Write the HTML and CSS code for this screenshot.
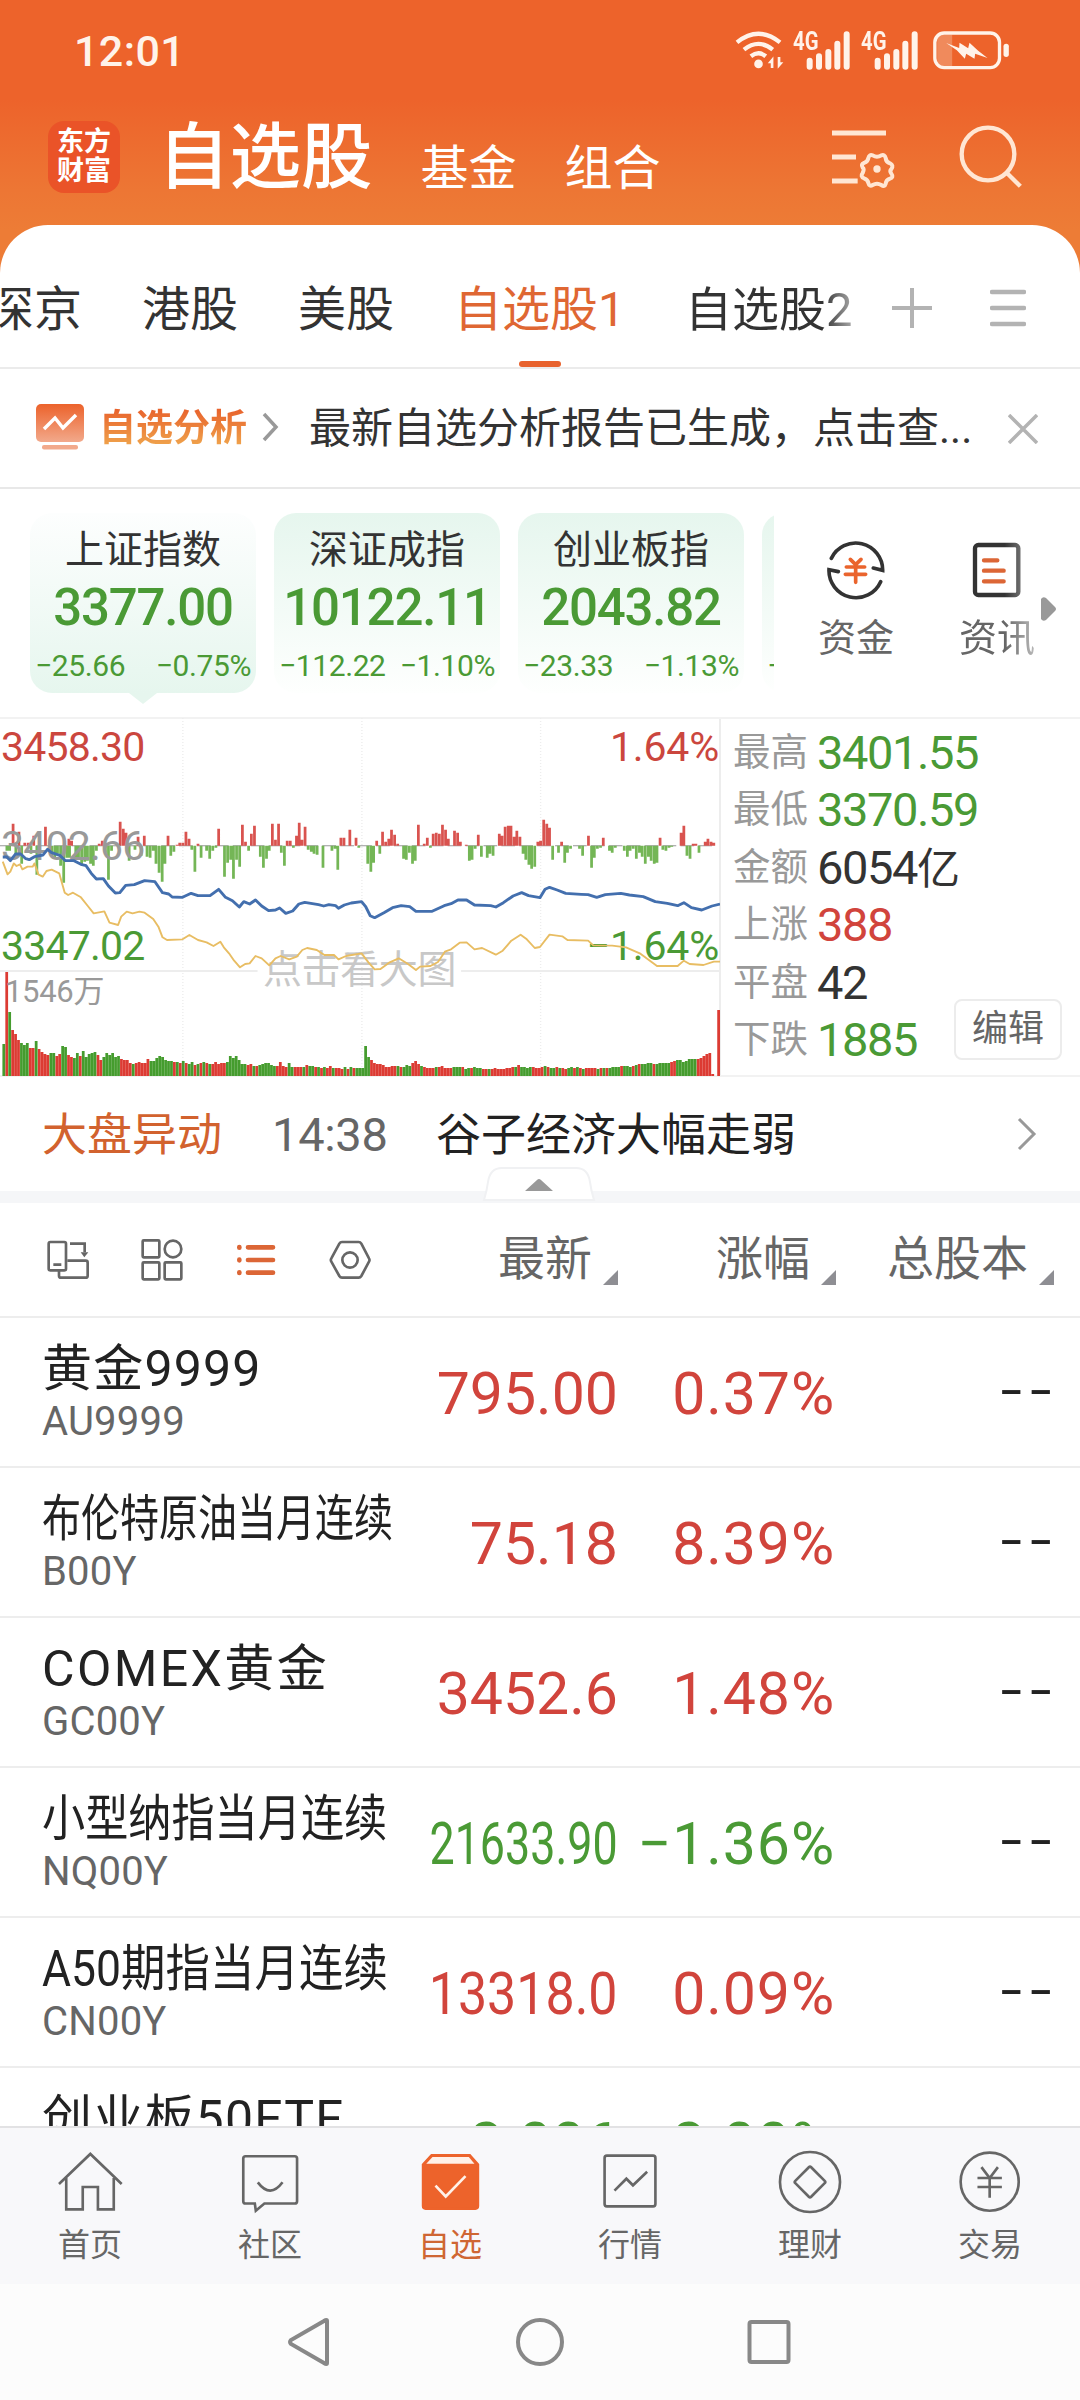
FILE: index.html
```html
<!DOCTYPE html>
<html lang="zh-CN">
<head>
    <meta charset="UTF-8">
    <meta name="viewport" content="width=device-width, initial-scale=1.0">
    <title>自选股</title>
    <link rel="stylesheet" href="styles.css">
</head>
<body>
    <header class="top">
        <div class="status">
            <span class="clock">12:01</span>
            <div class="status-icons">
                <svg class="wifi" viewBox="106 60 148 120" width="49" height="40" fill="none" stroke="#fff3ea" stroke-width="13">
                    <path d="M112 97Q177 45 242 97M133 119Q177 84 220 119M154 139Q177 121 199 139"/>
                    <circle cx="177" cy="162" r="13" fill="#fff3ea" stroke="none"/>
                    <path d="M205 160l17-20v34h-8v-14zM252 157l-17 20v-36h8v16z" fill="#fff3ea" stroke="none"/>
                </svg>
                <span class="signal">
                    <b>4G</b>
                    <svg viewBox="320 60 132 120" width="44" height="40" stroke="#fff3ea" stroke-width="18" stroke-linecap="round"><path d="M331 152v18M359 139v31M387 126v44M414 101v69M442 73v97"/></svg>
                </span>
                <span class="signal">
                    <b>4G</b>
                    <svg viewBox="320 60 132 120" width="44" height="40" stroke="#fff3ea" stroke-width="18" stroke-linecap="round"><path d="M331 152v18M359 139v31M387 126v44M414 101v69M442 73v97"/></svg>
                </span>
                <svg class="battery" viewBox="700 60 230 120" width="77" height="40">
                    <path d="M712 74h45v96h-45z" fill="#f08a5c"/>
                    <rect x="705" y="69" width="194" height="104" rx="28" fill="none" stroke="#fff3ea" stroke-width="10"/>
                    <rect x="911" y="101" width="16" height="40" rx="8" fill="#fff3ea"/>
                    <path d="M739 99l39 15 1-16 26 17 4-17 26 24 28 22-37-13-2 15-25-15-4 15-24-25z" fill="#fff3ea"/>
                </svg>
            </div>
        </div>
        <div class="title-bar">
            <div class="logo"><span>东方</span><span>财富</span></div>
            <h1>自选股</h1>
            <a class="section">基金</a>
            <a class="section">组合</a>
            <svg class="list-set" viewBox="390 345 192 192" width="64" height="64" fill="none" stroke="#ffe6d3" stroke-width="15">
                <path d="M393 369h162M393 441h72M393 513h77"/>
                <path d="M515 436q13 8 26 0 10-4 13 8 1 12 13 16 12 6 4 17-6 6 0 14 8 11-4 15-12 4-13 15-3 11-13 4-13-8-26 0-10 6-13-6-1-10-13-14-12-6-4-16 6-12 0-16-6-11 4-14 12-5 13-15 3-12 13-8z" stroke-width="12"/>
                <circle cx="528" cy="477" r="11" fill="#ffe6d3" stroke="none"/>
            </svg>
            <svg class="search" viewBox="774 345 192 192" width="64" height="64" fill="none" stroke="#ffe6d3" stroke-width="13">
                <circle cx="861" cy="432" r="79"/>
                <path d="M917 488l41 41"/>
            </svg>
        </div>
    </header>

    <main class="panel">
        <nav class="tabs">
            <div class="tab-scroll">
                <a>深京</a>
                <a>港股</a>
                <a>美股</a>
                <a class="active">自选股1</a>
                <a class="last">自选股2</a>
            </div>
            <svg viewBox="0 0 40 40" width="40" height="40" stroke="#b3b3b3" stroke-width="4"><path d="M0 20h40M20 0v40"/></svg>
            <svg viewBox="0 0 36 40" width="36" height="40" stroke="#b3b3b3" stroke-width="4.5" stroke-linecap="round"><path d="M2 4h32M2 20h32M2 36h32"/></svg>
        </nav>

        <section class="report">
            <svg viewBox="0 0 48 48" width="48" height="48">
                <defs>
                    <linearGradient id="ic" x1="0" y1="0" x2="0" y2="1"><stop offset="0" stop-color="#ec622b"/><stop offset="1" stop-color="#f2a98b"/></linearGradient>
                </defs>
                <rect x="0" y="1" width="48" height="38" rx="5" fill="url(#ic)"/>
                <rect x="6" y="42" width="36" height="4.500" rx="2" fill="#f2a98b"/>
                <path d="M8 26l11-11 8 10 13-13" fill="none" stroke="#fff" stroke-width="3.500"/>
            </svg>
            <strong>自选分析</strong>
            <svg class="more" viewBox="0 0 18 30" width="18" height="30" fill="none" stroke="#999" stroke-width="3.500"><path d="M3 2l12 13-12 13"/></svg>
            <p>最新自选分析报告已生成，点击查...</p>
            <svg class="close" viewBox="0 0 30 30" width="30" height="30" stroke="#b3b3b3" stroke-width="3.500"><path d="M1 1l28 28M29 1L1 29"/></svg>
        </section>

        <section class="indices">
            <div class="cards">
                <div class="card current"><h3>上证指数</h3><b>3377.00</b><p><span>−25.66</span><span>−0.75%</span></p></div>
                <div class="card"><h3>深证成指</h3><b>10122.11</b><p><span>−112.22</span><span>−1.10%</span></p></div>
                <div class="card"><h3>创业板指</h3><b>2043.82</b><p><span>−23.33</span><span>−1.13%</span></p></div>
                <div class="card"><h3></h3><b></b><p><span>−</span></p></div>
            </div>
            <div class="tools">
                <a>
                    <svg viewBox="138 60 180 180" width="60" height="60" fill="none" stroke="#333" stroke-width="11" stroke-linecap="round">
                        <path d="M154 115A81 81 0 0 1 308 151l-28-7M302 185A81 81 0 0 1 147 149l28 6"/>
                        <path d="M211 118l16 16 16-16M199 141h55M196 163h61M227 135v52" stroke="#ea642d"/>
                    </svg>
                    资金
                </a>
                <a class="fade">
                    <svg viewBox="562 60 180 180" width="60" height="60" fill="none" stroke="#333" stroke-width="13" stroke-linecap="round">
                        <rect x="586" y="75" width="130" height="150" rx="10"/>
                        <path d="M613 121h40M613 152h59M613 184h59" stroke="#dc6636"/>
                    </svg>
                    资讯
                </a>
                <svg class="next" viewBox="0 0 15 24" width="15" height="24"><path d="M0 2q2-3 5-1l9 9q2 2 0 4l-9 9q-3 2-5-1z" fill="#999"/></svg>
            </div>
        </section>

        <section class="market">
            <div class="chart">
                <!-- stretched plot: y 407 is the previous close, y 1098 the volume baseline -->
                <svg viewBox="0 21 2091 1080" preserveAspectRatio="none" width="720" height="360" fill="none">
                    <g stroke="#ededed">
                        <path d="M0 783h748M1339 783h752" stroke-width="2" vector-effect="non-scaling-stroke"/>
                        <path d="M531 24v1074M1051 24v1074M1570 24v1074" stroke-width="4" stroke-dasharray="3 6"/>
                    </g>
                    <path d="M0 407h2080" stroke="#999" stroke-width="3" stroke-dasharray="40 12"/>
                    <path id="ups" stroke="#d9534f" stroke-width="8"/>
                    <path id="downs" stroke="#74b656" stroke-width="8"/>
                    <path id="volUp" stroke="#dc3b33" stroke-width="8"/>
                    <path id="volDown" stroke="#459c2e" stroke-width="8"/>
                </svg>
                <span class="lbl high">3458.30</span>
                <span class="lbl mid">3402.66</span>
                <span class="lbl low">3347.02</span>
                <span class="lbl high right">1.64%</span>
                <span class="lbl low right">−1.64%</span>
                <span class="lbl vol">1546万</span>
                <span class="lbl hint">点击看大图</span>
                <svg class="lines" viewBox="0 21 2091 1080" preserveAspectRatio="none" width="720" height="360" fill="none" stroke-linejoin="round">
                    <polyline stroke="#e8bd63" stroke-width="5.500" points="8,455 22,493 30,485 40,460 48,468 58,463 65,478 80,470 95,470 100,460 112,494 124,500 135,483 150,479 172,490 188,548 198,555 212,548 235,562 255,588 272,610 303,604 318,638 343,645 352,620 368,605 385,610 405,605 420,608 445,627 460,650 472,682 485,690 530,688 550,675 575,690 600,697 620,708 640,695 650,712 665,730 680,752 697,772 712,762 725,760 742,738 760,745 782,766 800,745 815,738 840,748 862,740 878,720 892,714 920,720 942,735 970,735 983,748 1005,738 1050,730 1070,757 1088,778 1105,777 1130,758 1158,745 1185,762 1208,780 1220,770 1250,768 1272,756 1292,725 1310,718 1335,698 1355,697 1378,718 1400,714 1440,734 1460,722 1485,692 1512,674 1530,688 1553,714 1568,711 1596,674 1633,679 1648,690 1708,692 1723,706 1778,707 1818,712 1858,730 1908,768 1968,768 1986,752 2003,762 2043,765 2073,755 2091,755"/>
                    <polyline stroke="#436fae" stroke-width="8.500" points="8,441 20,441 30,452 45,432 60,432 75,446 85,449 100,440 125,435 138,418 150,428 175,437 190,452 215,452 235,463 250,467 265,490 280,507 300,506 315,528 335,549 348,548 365,526 390,524 420,512 450,515 472,548 490,552 500,561 530,562 555,550 575,557 610,557 635,538 655,562 675,572 695,591 708,575 725,582 742,570 760,588 780,602 800,600 812,594 830,610 850,603 868,582 885,577 925,584 940,588 955,584 975,587 983,595 1000,585 1020,579 1050,575 1062,590 1075,617 1088,623 1115,608 1140,593 1165,587 1190,590 1208,604 1255,604 1290,587 1310,581 1330,570 1355,570 1378,585 1425,587 1440,591 1462,578 1490,558 1515,548 1535,557 1568,563 1583,538 1596,532 1618,540 1643,550 1688,553 1708,554 1733,562 1758,554 1803,550 1828,555 1868,560 1903,575 1938,580 1968,587 1986,578 2008,593 2038,600 2068,588 2091,582"/>
                </svg>
            </div>
            <dl class="stats">
                <div><dt>最高</dt><dd class="down">3401.55</dd></div>
                <div><dt>最低</dt><dd class="down">3370.59</dd></div>
                <div><dt>金额</dt><dd>6054<small>亿</small></dd></div>
                <div><dt>上涨</dt><dd class="up">388</dd></div>
                <div><dt>平盘</dt><dd>42</dd></div>
                <div><dt>下跌</dt><dd class="down">1885</dd></div>
                <button type="button">编辑</button>
            </dl>
        </section>

        <section class="news">
            <strong>大盘异动</strong>
            <time>14:38</time>
            <p>谷子经济大幅走弱</p>
            <svg viewBox="0 0 20 34" width="20" height="34" fill="none" stroke="#999" stroke-width="3"><path d="M2 2l15 15L2 32"/></svg>
            <svg class="handle" viewBox="0 0 114 36" width="114" height="36">
                <path d="M2 34Q5 24 6 16 8 2 20 2h74q12 0 14 14 1 8 4 18z" fill="#fff" stroke="#f0f1f3" stroke-width="2"/>
                <path d="M43 25l12-11q2-2 4 0l12 11z" fill="#999"/>
            </svg>
        </section>

        <section class="list">
            <div class="row head">
                <div class="views">
                    <svg viewBox="141 117 126 126" width="42" height="42" fill="none" stroke="#666" stroke-width="8">
                        <rect x="146" y="126" width="52" height="85" rx="5"/>
                        <path d="M160 194h24M210 131h44v26M202 182h55q6 0 6 6v39q0 6-6 6h-74q-6 0-6-6v-14"/>
                        <path d="M242 157h23l-12 15z" fill="#666" stroke="none"/>
                    </svg>
                    <svg viewBox="423 117 126 126" width="42" height="42" fill="none" stroke="#666" stroke-width="8">
                        <rect x="428" y="121" width="50" height="51" rx="3"/>
                        <circle cx="519" cy="147" r="25"/>
                        <rect x="428" y="187" width="50" height="51" rx="3"/>
                        <rect x="494" y="187" width="50" height="51" rx="3"/>
                    </svg>
                    <svg viewBox="705 117 126 126" width="42" height="42" stroke="#dc6636" stroke-width="14" stroke-linecap="round">
                        <path d="M744 142h75M744 180h75M744 218h75M718 141v2M718 179v2M718 217v2"/>
                    </svg>
                    <svg viewBox="987 117 126 126" width="42" height="42" fill="none" stroke="#666" stroke-width="8">
                        <path d="M1026 126h50q5 0 8 5l23 44q3 5 0 10l-23 43q-3 5-8 5h-50q-5 0-8-5l-24-43q-3-5 0-10l24-44q3-5 8-5z"/>
                        <circle cx="1050" cy="180" r="23"/>
                    </svg>
                </div>
                <span class="sort">最新</span>
                <span class="sort">涨幅</span>
                <span class="sort">总股本</span>
            </div>
            <div class="row">
                <div><h4>黄金9999</h4><p>AU9999</p></div>
                <b class="up">795.00</b><b class="pct up">0.37%</b><b class="none">--</b>
            </div>
            <div class="row">
                <div><h4 class="fit-9">布伦特原油当月连续</h4><p>B00Y</p></div>
                <b class="up">75.18</b><b class="pct up">8.39%</b><b class="none">--</b>
            </div>
            <div class="row">
                <div><h4 class="wide">COMEX黄金</h4><p>GC00Y</p></div>
                <b class="up">3452.6</b><b class="pct up">1.48%</b><b class="none">--</b>
            </div>
            <div class="row">
                <div><h4 class="fit-8">小型纳指当月连续</h4><p>NQ00Y</p></div>
                <b class="down tight-8">21633.90</b><b class="pct down">−1.36%</b><b class="none">--</b>
            </div>
            <div class="row">
                <div><h4 class="fit-mix">A50期指当月连续</h4><p>CN00Y</p></div>
                <b class="up tight-7">13318.0</b><b class="pct up">0.09%</b><b class="none">--</b>
            </div>
            <div class="row">
                <div><h4>创业板50ETF</h4></div>
                <b class="down">2.006</b><b class="pct down">−2.00%</b><b class="none">--</b>
            </div>
        </section>
    </main>

    <nav class="bottom">
        <a>
            <svg viewBox="48 24 200 200" width="66" height="66" fill="none" stroke="#666" stroke-width="8">
                <path d="M54 130l95-91 95 91M76 112v95h50v-68h46v68h48v-95"/>
            </svg>
            首页
        </a>
        <a>
            <svg viewBox="588 24 200 200" width="66" height="66" fill="none" stroke="#666" stroke-width="8">
                <path d="M614 46h149q7 0 7 7v129q0 7-7 7h-92l-26 22-3-22h-28q-7 0-7-7V53q0-7 7-7z"/>
                <path d="M651 125q38 50 75 0"/>
            </svg>
            社区
        </a>
        <a class="active">
            <svg viewBox="1128 24 200 200" width="66" height="66" fill="none">
                <path d="M1146 71l26-28h116l25 28v126q0 8-8 8h-151q-8 0-8-8z" fill="#ed632b" stroke="#ed632b" stroke-width="7"/>
                <path d="M1156 69l19-21h110l17 21z" fill="#fff1e8"/>
                <path d="M1184 135l31 33 60-62" stroke="#fff1e8" stroke-width="8"/>
            </svg>
            自选
        </a>
        <a>
            <svg viewBox="108 24 200 200" width="66" height="66" fill="none" stroke="#666" stroke-width="8">
                <rect x="131" y="44" width="154" height="154" rx="7"/>
                <path d="M161 150l36-36 20 20 43-41"/>
            </svg>
            行情
        </a>
        <a>
            <svg viewBox="648 24 200 200" width="66" height="66" fill="none" stroke="#666" stroke-width="8">
                <circle cx="748" cy="124" r="91"/>
                <rect x="714" y="90" width="68" height="68" rx="5" transform="rotate(45 748 124)"/>
            </svg>
            理财
        </a>
        <a>
            <svg viewBox="1188 24 200 200" width="66" height="66" fill="none" stroke="#666" stroke-width="8">
                <circle cx="1287" cy="123" r="88"/>
                <path d="M1262 79l25 33 25-33M1250 112h74M1250 139h74M1287 112v60"/>
            </svg>
            交易
        </a>
    </nav>

    <footer class="system">
        <svg viewBox="0 0 48 52" width="48" height="52"><path d="M41 5v42q0 2-3 0L5 28q-2-2 0-4L38 5q3-2 3 0z"/></svg>
        <svg viewBox="0 0 48 52" width="48" height="52"><circle cx="24" cy="26" r="22"/></svg>
        <svg viewBox="0 0 48 52" width="48" height="52"><rect x="3.500" y="6" width="39" height="40" rx="2"/></svg>
    </footer>
    <script src="chart.js"></script>
</body>
</html>
```

FILE: styles.css
```css
/* General Styling */
* {
    box-sizing: border-box;
}

body {
    display: flex;
    flex-direction: column;
    width: 1080px;
    height: 2400px;
    margin: 0;
    overflow: hidden;
    background: linear-gradient(#ed632b 100px, #ed7634 190px, #ed7c36 230px);
    color: #333;
    font-family: Roboto, "Noto Sans CJK SC", sans-serif;
}

h1, h3, h4, p, dl, dd {
    margin: 0;
    font-weight: normal;
}

svg {
    display: block;
    flex: none;
}

.up {
    color: #d1443c;
}

.down {
    color: #4a9a35;
}

/* Header */
.top {
    height: 225px;
    flex: none;
    color: #fff;
}

.status {
    display: flex;
    justify-content: space-between;
    height: 102px;
    padding: 30px 70px 0 74px;
}

.clock {
    font-size: 43px;
    font-weight: 500;
    line-height: 43px;
    letter-spacing: 0.4px;
    color: #fff3ea;
}

.status-icons {
    display: flex;
}

.wifi {
    margin-right: -2px;
}

.signal {
    display: flex;
    width: 57px;
    margin-left: 11px;
}

.signal b {
    width: 13px;
    font-size: 26px;
    line-height: 23px;
    color: #fff3ea;
    transform: scaleX(0.78);
    transform-origin: left;
}

.battery {
    margin-left: 15px;
}

.title-bar {
    display: flex;
    height: 110px;
    padding-left: 48px;
}

.logo {
    display: flex;
    flex-direction: column;
    width: 72px;
    height: 72px;
    margin-top: 19px;
    padding: 7px 0 0 9px;
    border-radius: 16px;
    background: #ea5328;
    font-size: 27px;
    font-weight: 700;
    line-height: 29px;
}

.title-bar h1 {
    margin: 5px 0 0 38px;
    font-size: 71.500px;
    font-weight: 500;
    line-height: 102px;
}

.section {
    margin-left: 48px;
    font-size: 48px;
    line-height: 133px;
}

.section + .section {
    margin-left: 48px;
}

.list-set {
    margin: 23px 0 0 170px;
}

.search {
    margin: 23px 0 0 64px;
}

/* White sheet */
.panel {
    display: flex;
    flex: 1;
    flex-direction: column;
    min-height: 0;
    border-radius: 48px 48px 0 0;
    background: #fff;
    overflow: hidden;
}

.tabs {
    display: flex;
    flex: none;
    align-items: center;
    height: 144px;
    padding-top: 24px;
    border-bottom: 2px solid #ebebeb;
}

.tab-scroll {
    display: flex;
    gap: 60px;
    align-self: stretch;
    width: 855px;
    margin-right: 37px;
    overflow: hidden;
    font-size: 48px;
    line-height: 121px;
    white-space: nowrap;
}

.tab-scroll a:first-child {
    margin-left: -14px;
}

.tab-scroll .active {
    display: flex;
    flex-direction: column;
    align-items: center;
    height: 118px;
    font-size: 48px;
    color: #df6733;
}

.tab-scroll .active::after {
    content: "";
    flex: none;
    width: 42px;
    height: 6px;
    margin-top: -9px;
    border-radius: 3px;
    background: #e8622d;
}

.tab-scroll .last {
    font-size: 47px;
    background: linear-gradient(90deg, #333 138px, #bbb 172px);
    background-clip: text;
    -webkit-background-clip: text;
    color: transparent;
}

.tabs svg + svg {
    margin-left: 58px;
}

.report {
    display: flex;
    flex: none;
    align-items: center;
    height: 120px;
    padding: 0 42px 2px 36px;
    border-bottom: 2px solid #e8e8e8;
}

.report strong {
    margin: -4px 0 0 15px;
    font-size: 37px;
    background: linear-gradient(#e8622c 20%, #efa04a 85%);
    background-clip: text;
    -webkit-background-clip: text;
    color: transparent;
}

.report .more {
    margin-left: 14px;
}

.report p {
    flex: 1;
    margin: -6px 0 0 30px;
    font-size: 42px;
    white-space: nowrap;
}

.report .close {
    margin-top: 4px;
}

/* Index cards */
.indices {
    display: flex;
    flex: none;
    height: 228px;
    padding-top: 24px;
}

.cards {
    display: flex;
    gap: 18px;
    width: 774px;
    padding-left: 30px;
    overflow: hidden;
}

.card {
    flex: none;
    width: 226px;
    height: 180px;
    padding-top: 10px;
    border-radius: 22px;
    background: linear-gradient(#e6f6ee, #fefffe);
    text-align: center;
    white-space: nowrap;
}

.card.current {
    background: linear-gradient(#fdfefe, #e6f6ee);
}

.card.current::after {
    content: "";
    display: block;
    width: 28px;
    height: 11px;
    margin: 3px auto 0;
    background: #e6f6ee;
    clip-path: polygon(0 0, 100% 0, 50% 100%);
}

.card h3 {
    height: 54px;
    font-size: 39px;
    line-height: 54px;
}

.card b {
    display: block;
    height: 60px;
    font-size: 51px;
    font-weight: 500;
    line-height: 62px;
    letter-spacing: -1.200px;
    color: #4a9a35;
}

.card p {
    display: flex;
    justify-content: space-between;
    height: 53px;
    padding: 0 5px;
    font-size: 30px;
    line-height: 58px;
    letter-spacing: -0.4px;
    color: #4a9a35;
}

.tools {
    display: flex;
    flex: 1;
    padding: 27px 0 0 44px;
}

.tools a {
    display: flex;
    flex-direction: column;
    align-items: center;
    width: 76px;
    margin-right: 65px;
    font-size: 38px;
    line-height: 76px;
    color: #666;
}

.tools .fade {
    margin-right: 6px;
    -webkit-mask-image: linear-gradient(90deg, #000 60%, rgba(0, 0, 0, 0.45));
    mask-image: linear-gradient(90deg, #000 60%, rgba(0, 0, 0, 0.45));
}

.next {
    margin-top: 57px;
}

/* Intraday chart and stats */
.market {
    display: flex;
    flex: none;
    height: 360px;
    border-top: 2px solid #f2f2f2;
    border-bottom: 2px solid #f2f2f2;
}

.chart {
    position: relative;
    width: 721px;
    border-right: 2px solid #ededed;
}

.chart svg {
    margin-top: -2px;
}

.chart .lines {
    position: absolute;
    top: 0;
    left: 0;
}

/* labels lie over the plot */
.lbl {
    position: absolute;
    left: 1px;
    font-size: 41px;
    line-height: 48px;
    letter-spacing: -0.8px;
}

.lbl.right {
    left: auto;
    right: 0;
    letter-spacing: -0.2px;
}

.high {
    top: 4px;
    color: #cb463e;
}

.mid {
    top: 103px;
    color: #999;
}

.low {
    top: 203px;
    color: #4a9a35;
}

.vol {
    top: 249px;
    left: 5px;
    font-size: 31px;
    letter-spacing: -0.3px;
    color: #999;
}

.hint {
    top: 227px;
    left: 263px;
    font-size: 39px;
    letter-spacing: -0.4px;
    color: #c8c8c8;
}

.stats {
    position: relative;
    flex: 1;
    padding: 5px 0 0 12px;
}

.stats div {
    display: flex;
    height: 57.400px;
    line-height: 57px;
}

.stats dt {
    width: 84px;
    font-size: 37.500px;
    color: #999;
}

.stats dd {
    font-size: 47px;
    letter-spacing: -1.400px;
}

.stats small {
    font-size: 43px;
}

.stats button {
    position: absolute;
    right: 18px;
    bottom: 15px;
    width: 108px;
    height: 61px;
    padding: 0;
    border: 2px solid #ececec;
    border-radius: 8px;
    background: #fff;
    font: 36px/57px Roboto, "Noto Sans CJK SC", sans-serif;
    color: #666;
}

/* Market news */
.news {
    position: relative;
    display: flex;
    flex: none;
    align-items: center;
    height: 126px;
    padding: 0 43px 0 42px;
    border-bottom: 12px solid #f5f6f8;
    font-size: 45px;
}

.news strong {
    margin-top: -5px;
    font-weight: normal;
    color: #d2622e;
}

.news time {
    width: 164px;
    margin-left: 50px;
    font-size: 47px;
    letter-spacing: -0.3px;
    color: #666;
}

.news p {
    flex: 1;
    margin-top: -5px;
    color: #222;
}

.news .handle {
    position: absolute;
    left: 482px;
    bottom: -11px;
}

/* Watch list */
.row {
    display: grid;
    grid-template-columns: 378px 198px 217px 219px;
    height: 150px;
    padding-left: 42px;
    border-bottom: 2px solid #ededed;
}

.row.head {
    grid-template-columns: 358px 218px 218px 218px;
    height: 115px;
}

.views {
    display: flex;
    gap: 52px;
    padding: 36px 0 0 5px;
}

.sort {
    display: flex;
    justify-content: flex-end;
    font-size: 47px;
    line-height: 111px;
    color: #666;
}

.sort::after {
    content: "";
    width: 15px;
    height: 15px;
    margin: 67px 0 0 11px;
    background: #8e8e93;
    clip-path: polygon(100% 0, 100% 100%, 0 100%);
}

.row h4 {
    height: 82px;
    padding-top: 16px;
    font-size: 50px;
    line-height: 70px;
    letter-spacing: 1.200px;
    white-space: nowrap;
    color: #222;
    transform-origin: left;
}

.row p {
    font-size: 40px;
    line-height: 44px;
    letter-spacing: 0.2px;
    color: #666;
}

.row b {
    justify-self: end;
    font-size: 59px;
    font-weight: normal;
    line-height: 152px;
    transform-origin: right;
}

.row .pct {
    letter-spacing: 0.9px;
}

.row .none {
    margin-right: -5px;
    font-size: 78px;
    font-weight: 300;
    line-height: 146px;
    letter-spacing: 7px;
    color: #222;
}

/* long names and prices are squeezed to the column */
.row .wide {
    letter-spacing: 2.400px;
}

.row .fit-9 {
    letter-spacing: 0;
    transform: scaleX(0.78);
}

.row .fit-8 {
    letter-spacing: 0;
    transform: scaleX(0.863);
}

.row .fit-mix {
    letter-spacing: 0;
    transform: scaleX(0.89);
}

.tight-8 {
    transform: scaleX(0.76);
}

.tight-7 {
    transform: scaleX(0.88);
}

/* Bottom navigation */
.bottom {
    display: flex;
    flex: none;
    height: 158px;
    border-top: 2px solid #e2e2e4;
    background: #f8f8fa;
}

.bottom a {
    display: flex;
    flex: 1;
    flex-direction: column;
    align-items: center;
    padding-top: 21px;
    font-size: 32px;
    line-height: 60px;
    color: #666;
}

.bottom .active {
    color: #cf6633;
}

.system {
    display: flex;
    flex: none;
    justify-content: center;
    gap: 182px;
    height: 116px;
    padding-top: 32px;
    background: #fcfcfc;
}

.system svg {
    fill: none;
    stroke: #888;
    stroke-width: 4;
}
```

FILE: chart.js
```javascript
// x position and height of each strength bar above / below the close line
const ups = [38,22, 55,14, 72,3, 82,3, 98,10, 132,19, 200,7, 208,5, 288,2, 297,5, 349,24, 358,17, 366,13, 401,9, 419,10, 488,10,
    514,1, 522,3, 531,3, 540,14, 549,7, 575,2, 635,17, 704,21, 713,4, 730,12, 739,20, 791,22, 800,6, 809,22, 834,5, 843,5,
    861,10, 869,23, 877,6, 886,19, 990,8, 999,8, 1016,16, 1034,8, 1094,5, 1111,14, 1120,4, 1129,7, 1137,16, 1146,11, 1155,2,
    1215,21, 1232,2, 1241,8, 1258,12, 1267,13, 1276,12, 1285,21, 1294,16, 1302,7, 1320,15, 1329,13, 1337,4, 1354,1, 1389,11,
    1450,12, 1458,10, 1467,19, 1476,20, 1484,20, 1493,9, 1501,15, 1510,9, 1562,4, 1570,5, 1579,26, 1588,22, 1596,18, 1631,4,
    1709,10, 1752,8, 1917,8, 1978,13, 1986,20, 2013,2, 2021,2, 2048,4, 2056,7, 2065,4, 2073,3];
const downs = [20,5, 28,5, 46,10, 63,18, 90,8, 107,29, 150,10, 159,13, 167,8, 176,20, 185,37, 194,12, 202,12, 220,12, 228,14,
    237,19, 246,16, 254,15, 263,18, 271,20, 280,5, 306,7, 315,34, 324,5, 375,15, 392,4, 410,10, 427,11, 436,12, 445,5, 453,18,
    462,27, 471,36, 479,18, 496,10, 505,6, 557,4, 566,26, 584,12, 600,5, 609,13, 618,5, 627,2, 652,31, 661,17, 670,14, 678,33,
    687,14, 696,21, 722,5, 756,11, 765,22, 774,13, 782,5, 817,7, 826,20, 852,2, 895,4, 904,6, 912,8, 921,9, 938,22, 964,5,
    973,3, 981,24, 1042,2, 1068,18, 1077,26, 1085,17, 1103,8, 1172,13, 1180,14, 1189,7, 1198,18, 1206,15, 1250,2, 1363,15,
    1371,14, 1380,3, 1398,11, 1415,12, 1423,8, 1432,10, 1519,8, 1527,14, 1536,19, 1544,23, 1553,21, 1605,14, 1622,7, 1640,17,
    1648,7, 1657,3, 1683,3, 1692,10, 1718,22, 1726,12, 1735,3, 1744,2, 1770,5, 1778,7, 1787,2, 1813,5, 1822,11, 1830,5, 1839,3,
    1848,13, 1857,7, 1865,11, 1874,18, 1883,11, 1891,15, 1900,18, 1908,17, 1925,4, 1934,5, 1943,2, 1951,1, 1995,10, 2004,13, 2030,7];

// volume per slot, and the direction of each slot
const volumes = [32,104,64,46,42,36,33,31,33,28,28,35,27,24,22,21,23,23,20,22,30,29,21,19,18,23,20,25,19,22,23,24,21,16,19,23,21,23,
    19,20,17,16,16,13,12,13,14,13,13,17,15,15,18,20,19,16,15,15,14,14,13,15,13,12,14,11,12,13,14,13,12,12,14,12,13,13,14,20,18,20,16,
    12,12,11,12,10,10,11,12,13,13,11,10,10,14,10,9,13,9,9,9,9,9,11,10,10,9,9,8,9,8,10,8,8,8,7,9,7,9,8,8,8,8,30,19,16,13,12,12,11,9,9,10,10,
    10,9,9,11,10,13,15,12,10,9,8,8,8,9,9,10,8,8,8,9,9,9,9,7,8,8,9,8,8,7,7,7,7,8,7,7,7,8,8,9,9,11,9,9,8,9,9,8,8,9,10,9,8,8,9,8,8,
    7,8,9,8,9,8,7,8,8,8,8,7,8,8,8,8,9,9,9,10,10,10,9,10,11,12,12,12,13,13,12,12,13,13,13,13,14,15,16,16,14,15,17,17,17,17,18,20,22,23,
    2,0,66];
const sides = 'grgrrrgggrrgrrrrggrrggrrggrggggg' + 'rrggggggrrrrgrrrrrggggggggrgrgrggrgrg' + 'rgrrrrrgggggggrrgrggggggrrrrggrrrgrg' +
    'grgrgrrgrrrgrgrgggggrrrrrrrrrgrgggrrrgrrrrgrrrrrgggrggrgggrrgrrrrrrrrgrggg' + 'grrrrgrggrgrrggrgrgrrrrgrgrggggrgggrgrggggrgggggrrgggggggrrrrrr';

function bars(pairs, sign) {
    let d = '';
    for (let i = 0; i < pairs.length; i += 2) {
        d += `M${pairs[i]} 407v${sign * pairs[i + 1] * 3}`;
    }
    return d;
}

document.getElementById('ups').setAttribute('d', bars(ups, -1));
document.getElementById('downs').setAttribute('d', bars(downs, 1));

const step = 2076 / (volumes.length - 1);
const vol = { r: '', g: '' };
volumes.forEach((v, i) => {
    const side = i > volumes.length - 8 ? 'r' : sides[i] || 'g';
    vol[side] += `M${(11 + i * step).toFixed(1)} 1098v${-v * 3}`;
});
document.getElementById('volUp').setAttribute('d', vol.r);
document.getElementById('volDown').setAttribute('d', vol.g);
```
